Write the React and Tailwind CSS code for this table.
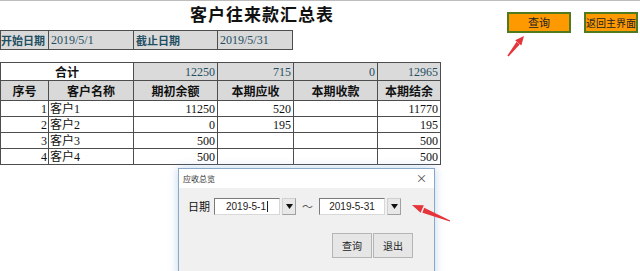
import React from "react";

const cellFont = "font-['Liberation_Serif','Noto_Sans_CJK_SC',serif]";

const rows = [
  { no: 1, name: "客户1", open: "11250", due: "520", recv: "", bal: "11770" },
  { no: 2, name: "客户2", open: "0", due: "195", recv: "", bal: "195" },
  { no: 3, name: "客户3", open: "500", due: "", recv: "", bal: "500" },
  { no: 4, name: "客户4", open: "500", due: "", recv: "", bal: "500" },
];

function Arrows() {
  return (
    <svg
      className="absolute left-0 top-0 pointer-events-none z-20"
      width="640"
      height="271"
      viewBox="0 0 640 271"
    >
      {/* arrow toward the 查询 button */}
      <polygon points="507.4,54.6 508.6,55.4 519.6,43.4 516.6,40.8" fill="#e5343a" />
      <polygon points="524,35 521.3,44.6 515.1,39.2" fill="#e5343a" />
      {/* arrow toward the end-date dropdown */}
      <polygon points="450.2,219.4 449.8,220.6 422.4,211.8 424.2,206.8" fill="#e5343a" />
      <polygon points="412,204 423.8,204.3 420.6,211.7" fill="#e5343a" />
    </svg>
  );
}

function DateBox({ value, caret }) {
  return (
    <div className="flex items-center gap-[2px]">
      <div className="w-[66px] h-[17px] bg-white border border-t-[#7a7a7a] border-l-[#7a7a7a] border-r-[#d8d8d8] border-b-[#d8d8d8] flex items-center justify-center text-[10px] text-[#222] font-['Liberation_Sans',sans-serif]">
        <span>{value}</span>
        {caret && <span className="w-px h-[11px] bg-[#222] ml-[1px]" />}
      </div>
      <div className="w-[14px] h-[17px] bg-[#e8e8e8] border border-[#a0a0a0] border-l-[#d0d0d0] border-t-[#d0d0d0] flex items-center justify-center">
        <svg width="7" height="5" viewBox="0 0 7 5">
          <polygon points="0,0 7,0 3.5,5" fill="#111" />
        </svg>
      </div>
    </div>
  );
}

function Dialog() {
  return (
    <div className="absolute left-[178px] top-[167px] w-[257px] h-[110px] border border-[#8aa6c8] bg-[#f0f0f0] shadow-[0_0_9px_rgba(120,165,215,0.45)] z-10 font-['Noto_Sans_CJK_SC',sans-serif]">
      <div className="h-[19px] bg-white flex items-center justify-between pl-[4px] pr-[7px]">
        <span className="text-[8px] text-[#333] leading-none">应收总览</span>
        <span className="text-[11px] text-[#444] leading-none">×</span>
      </div>
      <div className="pt-[10px] pl-[9px] flex items-center">
        <span className="text-[11px] text-[#111] w-[26px] leading-none">日期</span>
        <DateBox value="2019-5-1" caret />
        <span className="text-[11px] text-[#555] w-[23px] text-center leading-none">～</span>
        <DateBox value="2019-5-31" />
      </div>
      <div className="mt-[18px] flex justify-end pr-[21px] gap-[1px]">
        <div className="w-[40px] h-[25px] bg-[#e6e6e6] border border-[#b5b5b5] flex items-center justify-center text-[10px] text-[#222]">
          查询
        </div>
        <div className="w-[40px] h-[25px] bg-[#e6e6e6] border border-[#b5b5b5] flex items-center justify-center text-[10px] text-[#222]">
          退出
        </div>
      </div>
    </div>
  );
}

export default function App() {
  const td = "border border-[#4d4d4d] p-0 leading-none whitespace-nowrap overflow-hidden";
  const cjkBold = "font-semibold font-['Noto_Sans_CJK_SC',sans-serif]";
  return (
    <div className="relative w-[640px] h-[271px] overflow-hidden bg-white border-t border-[#bdbdbd]">
      <div className="flex">
        {/* sheet area */}
        <div className={`w-[440px] shrink-0 ${cellFont}`}>
          <div className="h-[29px] pl-[84px] flex items-start justify-center pt-[2px]">
            <span className="text-[17px] font-semibold text-[#111] tracking-[1px] font-['Noto_Sans_CJK_SC',serif] leading-[22px]">
              客户往来款汇总表
            </span>
          </div>

          <table className="table-fixed border-collapse w-[292px] text-[12px]">
            <colgroup>
              <col className="w-[48px]" />
              <col className="w-[85px]" />
              <col className="w-[84px]" />
              <col className="w-[75px]" />
            </colgroup>
            <tbody>
              <tr className="h-[19px] bg-[#d9d9d9] text-[#1f4f63]">
                <td className={`${td} ${cjkBold} text-[11px]`}>开始日期</td>
                <td className={`${td} pl-[2px]`}>2019/5/1</td>
                <td className={`${td} ${cjkBold} text-[11px] pl-[2px]`}>截止日期</td>
                <td className={`${td} pl-[2px]`}>2019/5/31</td>
              </tr>
            </tbody>
          </table>

          <table className="table-fixed border-collapse w-[440px] mt-[12px] text-[12px]">
            <colgroup>
              <col className="w-[48px]" />
              <col className="w-[85px]" />
              <col className="w-[84px]" />
              <col className="w-[76px]" />
              <col className="w-[84px]" />
              <col className="w-[63px]" />
            </colgroup>
            <tbody>
              <tr className="h-[18px]">
                <td colSpan={2} className={`${td} ${cjkBold} bg-white text-center text-[#111]`}>
                  合计
                </td>
                <td className={`${td} bg-[#dadada] text-right pr-[2px] text-[#1f4f63]`}>12250</td>
                <td className={`${td} bg-[#dadada] text-right pr-[2px] text-[#1f4f63]`}>715</td>
                <td className={`${td} bg-[#dadada] text-right pr-[2px] text-[#1f4f63]`}>0</td>
                <td className={`${td} bg-[#dadada] text-right pr-[2px] text-[#1f4f63]`}>12965</td>
              </tr>
              <tr className="h-[20px] bg-[#d9d9d9] text-[#111]">
                <td className={`${td} ${cjkBold} text-center`}>序号</td>
                <td className={`${td} ${cjkBold} text-center`}>客户名称</td>
                <td className={`${td} ${cjkBold} text-center`}>期初余额</td>
                <td className={`${td} ${cjkBold} text-center`}>本期应收</td>
                <td className={`${td} ${cjkBold} text-center`}>本期收款</td>
                <td className={`${td} ${cjkBold} text-center`}>本期结余</td>
              </tr>
              {rows.map((r) => (
                <tr key={r.no} className="h-[16px] text-[#111]">
                  <td className={`${td} text-right pr-[1px]`}>{r.no}</td>
                  <td className={`${td} text-left pl-[1px]`}>{r.name}</td>
                  <td className={`${td} text-right pr-[2px]`}>{r.open}</td>
                  <td className={`${td} text-right pr-[2px]`}>{r.due}</td>
                  <td className={`${td} text-right pr-[2px]`}>{r.recv}</td>
                  <td className={`${td} text-right pr-[2px]`}>{r.bal}</td>
                </tr>
              ))}
            </tbody>
          </table>
        </div>

        {/* sheet buttons */}
        <div className="flex items-start gap-[13px] pl-[67px] pt-[11px] font-['Noto_Sans_CJK_SC',sans-serif]">
          <div className="w-[64px] h-[21px] shrink-0 bg-[#ff9900] border-2 border-[#4f7a1e] flex items-center justify-center text-[11px] text-[#222] leading-none">
            查询
          </div>
          <div className="w-[54px] h-[21px] shrink-0 bg-[#ff9900] border-2 border-[#4f7a1e] flex items-center justify-center text-[10px] text-[#222] leading-none whitespace-nowrap">
            返回主界面
          </div>
        </div>
      </div>

      <Dialog />
      <Arrows />
    </div>
  );
}
